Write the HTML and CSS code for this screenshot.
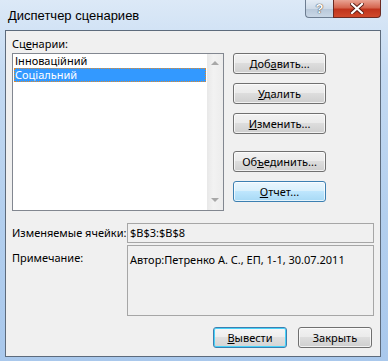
FILE: index.html
```html
<!DOCTYPE html>
<html lang="ru">
<head>
  <meta charset="UTF-8" />
  <title>Диспетчер сценариев</title>
  <link rel="stylesheet" href="styles.css">
</head>
<body>

  <div class="window">
    <div class="titlebar">
      <span class="title">Диспетчер сценариев</span>
      <div class="caption-buttons">
        <span class="cap-help">?</span>
        <span class="cap-close">
          <svg width="14" height="11" viewBox="0 0 14 11">
            <path d="M2 1 L12 10 M12 1 L2 10" stroke="#5a1c14" stroke-width="4" stroke-linecap="square"/>
            <path d="M2 1 L12 10 M12 1 L2 10" stroke="#ffffff" stroke-width="2.2" stroke-linecap="square"/>
          </svg>
        </span>
      </div>
    </div>

    <div class="client">
      <div class="top">
        <div class="list-col">
          <div class="label">Сц<u>е</u>нарии:</div>
          <div class="listbox">
            <div class="items">
              <div class="item">Інноваційний</div>
              <div class="item selected">Соціальний</div>
            </div>
            <div class="scrollbar">
              <span class="arrow up"></span>
              <span class="arrow down"></span>
            </div>
          </div>
        </div>
        <div class="btn-col">
          <button class="btn">Доб<u>а</u>вить...</button>
          <button class="btn"><u>У</u>далить</button>
          <button class="btn"><u>И</u>зменить...</button>
          <button class="btn gap">Об<u>ъ</u>единить...</button>
          <button class="btn hot"><u>О</u>тчет...</button>
        </div>
      </div>

      <div class="fields">
        <div class="field-label mid">Изменяемые ячейки:</div>
        <div class="field cells">$B$3:$B$8</div>
        <div class="field-label">Примечание:</div>
        <div class="field note">Автор:Петренко А. С., ЕП, 1-1, 30.07.2011</div>
      </div>

      <div class="bottom">
        <button class="btn default"><u>В</u>ывести</button>
        <button class="btn">Закрыть</button>
      </div>
    </div>
  </div>

</body>
</html>
```

FILE: styles.css
```css
html, body {
  margin: 0;
  padding: 0;
}

body {
  width: 388px;
  height: 361px;
  overflow: hidden;
  font-family: 'Noto Sans', 'Liberation Sans', sans-serif;
  font-size: 11px;
  line-height: 14px;
  color: #000000;
}

.window {
  width: 388px;
  height: 361px;
  box-sizing: border-box;
  padding: 0 7px 4px 5px;
  background: linear-gradient(180deg, #dce9f7 0%, #c4daf2 20%, #b3cfee 60%, #a9c8ec 100%);
  display: flex;
  flex-direction: column;
}

.titlebar {
  height: 30px;
  display: flex;
  align-items: flex-start;
  justify-content: space-between;
  flex-shrink: 0;
}

.title {
  font-family: 'Liberation Sans', Arial, sans-serif;
  font-size: 13px;
  margin: 9px 0 0 3px;
  color: #000000;
}

.caption-buttons {
  display: flex;
}

.cap-help {
  width: 28px;
  height: 18px;
  box-sizing: border-box;
  border: 1px solid #6d7d91;
  border-top: none;
  border-right: none;
  border-radius: 0 0 0 4px;
  background: linear-gradient(180deg, #e4ecf5 0%, #cfdbe8 50%, #b7c7d9 51%, #c9d7e6 100%);
  color: #ffffff;
  font-family: 'Liberation Sans', Arial, sans-serif;
  font-weight: bold;
  font-size: 13px;
  text-align: center;
  line-height: 17px;
  text-shadow: 0 0 1px #333, 0 0 1px #333;
}

.cap-close {
  width: 48px;
  height: 18px;
  box-sizing: border-box;
  border: 1px solid #6b2a22;
  border-top: none;
  border-radius: 0 0 4px 0;
  background: linear-gradient(180deg, #e9a393 0%, #d5664f 45%, #c0341c 55%, #d0492b 100%);
  display: flex;
  align-items: center;
  justify-content: center;
}

.client {
  flex: 1;
  background-color: #f0f0f0;
  border: 1px solid #5d6b7c;
  padding: 4px 7px 0 6px;
  display: flex;
  flex-direction: column;
}

.top {
  display: flex;
  gap: 9px;
}

.label {
  line-height: 14px;
  margin: 2px 0 2px 0;
}

.listbox {
  width: 212px;
  height: 158px;
  box-sizing: border-box;
  border: 1px solid #828790;
  background-color: #ffffff;
  display: flex;
}

.items {
  flex: 1;
  padding: 0 1px;
}

.item {
  height: 14px;
  line-height: 14px;
  padding: 0 1px;
}

.item.selected {
  background-color: #3399ff;
  color: #ffffff;
  outline: 1px dotted #e08a2a;
  outline-offset: -1px;
}

.scrollbar {
  width: 16px;
  background: linear-gradient(90deg, #e8e8e8, #f2f2f2 40%, #ececec);
  position: relative;
}

.arrow {
  position: absolute;
  left: 4px;
  width: 0;
  height: 0;
  border-left: 4px solid transparent;
  border-right: 4px solid transparent;
}

.arrow.up {
  top: 7px;
  border-bottom: 4px solid #a8a8a8;
}

.arrow.down {
  bottom: 8px;
  border-top: 4px solid #a8a8a8;
}

.btn-col {
  display: flex;
  flex-direction: column;
  padding-top: 18px;
}

.btn {
  width: 93px;
  height: 21px;
  box-sizing: border-box;
  padding: 0;
  margin: 0 0 9px 0;
  font-family: 'Noto Sans', 'Liberation Sans', sans-serif;
  font-size: 11px;
  line-height: 14px;
  color: #000000;
  border: 1px solid #707070;
  border-radius: 3px;
  background: linear-gradient(180deg, #f2f2f2 0%, #ebebeb 45%, #dddddd 50%, #cfcfcf 100%);
  box-shadow: inset 0 0 0 1px rgba(255,255,255,0.7);
}

.btn.gap {
  margin-top: 8px;
}

.btn.hot {
  border-color: #3c7fb1;
  background: linear-gradient(180deg, #eaf6fd 0%, #d9f0fc 45%, #bee6fd 50%, #a7d9f5 100%);
}

.fields {
  display: grid;
  grid-template-columns: 115px 247px;
  row-gap: 2px;
  margin-top: 12px;
}

.field-label {
  padding-top: 6px;
  white-space: nowrap;
}

.field-label.mid {
  padding-top: 3px;
}

.field {
  box-sizing: border-box;
  border: 1px solid #a6a6a6;
  background-color: #f0f0f0;
  padding: 2px 2px;
  white-space: nowrap;
}

.field.cells {
  height: 20px;
}

.field.note {
  height: 71px;
  padding-top: 7px;
}

.bottom {
  display: flex;
  justify-content: flex-end;
  gap: 11px;
  margin-top: 11px;
  padding-right: 1px;
}

.bottom .btn {
  width: 74px;
  margin: 0;
}

.btn.default {
  border-color: #3c7fb1;
  box-shadow: inset 0 0 0 1px #48d2f8;
  background: linear-gradient(180deg, #f6f6f6 0%, #eeeeee 45%, #e0e0e0 50%, #d4d4d4 100%);
}
```
